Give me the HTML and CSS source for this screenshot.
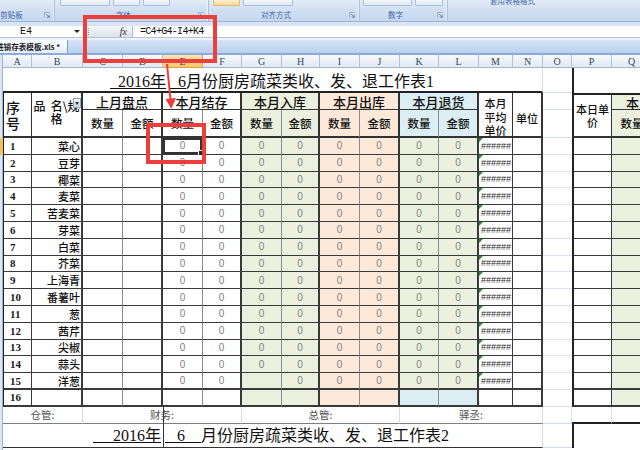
FILE: index.html
```html
<!DOCTYPE html>
<html lang="zh-CN">
<head>
<meta charset="utf-8">
<title>进销存表模板.xls</title>
<link rel="stylesheet" href="styles.css">
</head>
<body>
<div class="ribbon">
  <div class="grp g1">
    <div class="btns"></div>
    <div class="gfoot"><span class="glabel">剪贴板</span><svg class="launch" viewBox="0 0 6 6"><path d="M0.5 5.5V0.5H5.5" fill="none" stroke="#8DA3C2" stroke-width="0.8"/><path d="M2 2L5.2 5.2M5.2 2.8V5.2H2.8" fill="none" stroke="#5A77A2" stroke-width="0.8"/></svg></div>
  </div>
  <div class="grp g2">
    <div class="btns"><span class="btn w50"></span><span class="btn w27"></span><span class="btn w27"></span></div>
    <div class="gfoot"><span class="glabel">字体</span><svg class="launch" viewBox="0 0 6 6"><path d="M0.5 5.5V0.5H5.5" fill="none" stroke="#8DA3C2" stroke-width="0.8"/><path d="M2 2L5.2 5.2M5.2 2.8V5.2H2.8" fill="none" stroke="#5A77A2" stroke-width="0.8"/></svg></div>
  </div>
  <div class="grp g3">
    <div class="btns"><span class="btn hot w27"></span><span class="btn w50"></span></div>
    <div class="gfoot"><span class="glabel">对齐方式</span><svg class="launch" viewBox="0 0 6 6"><path d="M0.5 5.5V0.5H5.5" fill="none" stroke="#8DA3C2" stroke-width="0.8"/><path d="M2 2L5.2 5.2M5.2 2.8V5.2H2.8" fill="none" stroke="#5A77A2" stroke-width="0.8"/></svg></div>
  </div>
  <div class="grp g4">
    <div class="btns"><span class="btn w50"></span><span class="btn w29"></span></div>
    <div class="gfoot"><span class="glabel">数字</span><svg class="launch" viewBox="0 0 6 6"><path d="M0.5 5.5V0.5H5.5" fill="none" stroke="#8DA3C2" stroke-width="0.8"/><path d="M2 2L5.2 5.2M5.2 2.8V5.2H2.8" fill="none" stroke="#5A77A2" stroke-width="0.8"/></svg></div>
  </div>
  <div class="grp g5">
    <div class="btns"><span class="topcap">套用表格格式</span></div>
  </div>
</div>

<div class="fwrap">
  <div class="fbar">
    <div class="namebox"><span>E4</span><span class="dd"></span></div>
    <div class="fxzone"><span class="grip"></span><span class="fx">fx</span></div>
    <div class="formula">=C4+G4-I4+K4</div>
  </div>
</div>

<div class="tabbar">
  <div class="tab"><span>进销存表模板.xls *</span></div>
</div>

<div class="sheet">
  <div class="stub"></div>
  <div class="rowmark"></div>

  <span class="ch">A</span><span class="ch">B</span><span class="ch">C</span><span class="ch">D</span><span class="ch on">E</span><span class="ch">F</span><span class="ch">G</span><span class="ch">H</span><span class="ch">I</span><span class="ch">J</span><span class="ch">K</span><span class="ch">L</span><span class="ch">M</span><span class="ch">N</span><span class="ch">O</span><span class="ch">P</span><span class="ch">Q</span>

  <div class="t1 title"><span><u>&nbsp;&nbsp;2016年</u>&nbsp;<u>&nbsp;&nbsp;6</u>月份厨房疏菜类收、发、退工作表1</span></div>
  <div class="to"></div><div class="tp"></div><div class="tq"></div>

  <div class="hc h-xh"><span>序<br>号</span></div>
  <div class="hc h-pm"><span>品&nbsp;&nbsp;名\规<br>格</span><span class="filter"></span></div>
  <div class="hc h-grp">上月盘点</div>
  <div class="hc h-grp">本月结存</div>
  <div class="hc h-grp gn">本月入库</div>
  <div class="hc h-grp pc">本月出库</div>
  <div class="hc h-grp bl">本月退货</div>
  <div class="hc h-m"><span>本月<br>平均<br>单价</span></div>
  <div class="hc h-n">单位</div>
  <div class="h-o"></div>
  <div class="hc h-p"><span>本日单<br>价</span></div>
  <div class="hc h-q1 gn">本月入库</div>

  <div class="hc hs">数量</div><div class="hc hs r">金额</div>
  <div class="hc hs">数量</div><div class="hc hs r">金额</div>
  <div class="hc hs gn">数量</div><div class="hc hs r gn">金额</div>
  <div class="hc hs pc">数量</div><div class="hc hs r pc">金额</div>
  <div class="hc hs bl">数量</div><div class="hc hs r bl">金额</div>
  <div class="h-o"></div>
  <div class="hc h-q2 gn">数量</div>

  <div class="dr"><span>1</span><span>菜心</span><span></span><span></span><span class="sel">0</span><span>0</span><span>0</span><span>0</span><span>0</span><span>0</span><span>0</span><span>0</span><span>######</span><span></span><span></span><span></span><span></span></div>
  <div class="dr"><span>2</span><span>豆芽</span><span></span><span></span><span>0</span><span>0</span><span>0</span><span>0</span><span>0</span><span>0</span><span>0</span><span>0</span><span>######</span><span></span><span></span><span></span><span></span></div>
  <div class="dr"><span>3</span><span>椰菜</span><span></span><span></span><span>0</span><span>0</span><span>0</span><span>0</span><span>0</span><span>0</span><span>0</span><span>0</span><span>######</span><span></span><span></span><span></span><span></span></div>
  <div class="dr"><span>4</span><span>麦菜</span><span></span><span></span><span>0</span><span>0</span><span>0</span><span>0</span><span>0</span><span>0</span><span>0</span><span>0</span><span>######</span><span></span><span></span><span></span><span></span></div>
  <div class="dr"><span>5</span><span>苦麦菜</span><span></span><span></span><span>0</span><span>0</span><span>0</span><span>0</span><span>0</span><span>0</span><span>0</span><span>0</span><span>######</span><span></span><span></span><span></span><span></span></div>
  <div class="dr"><span>6</span><span>芽菜</span><span></span><span></span><span>0</span><span>0</span><span>0</span><span>0</span><span>0</span><span>0</span><span>0</span><span>0</span><span>######</span><span></span><span></span><span></span><span></span></div>
  <div class="dr"><span>7</span><span>白菜</span><span></span><span></span><span>0</span><span>0</span><span>0</span><span>0</span><span>0</span><span>0</span><span>0</span><span>0</span><span>######</span><span></span><span></span><span></span><span></span></div>
  <div class="dr"><span>8</span><span>芥菜</span><span></span><span></span><span>0</span><span>0</span><span>0</span><span>0</span><span>0</span><span>0</span><span>0</span><span>0</span><span>######</span><span></span><span></span><span></span><span></span></div>
  <div class="dr"><span>9</span><span>上海青</span><span></span><span></span><span>0</span><span>0</span><span>0</span><span>0</span><span>0</span><span>0</span><span>0</span><span>0</span><span>######</span><span></span><span></span><span></span><span></span></div>
  <div class="dr"><span>10</span><span>番薯叶</span><span></span><span></span><span>0</span><span>0</span><span>0</span><span>0</span><span>0</span><span>0</span><span>0</span><span>0</span><span>######</span><span></span><span></span><span></span><span></span></div>
  <div class="dr"><span>11</span><span>葱</span><span></span><span></span><span>0</span><span>0</span><span>0</span><span>0</span><span>0</span><span>0</span><span>0</span><span>0</span><span>######</span><span></span><span></span><span></span><span></span></div>
  <div class="dr"><span>12</span><span>茜芹</span><span></span><span></span><span>0</span><span>0</span><span>0</span><span>0</span><span>0</span><span>0</span><span>0</span><span>0</span><span>######</span><span></span><span></span><span></span><span></span></div>
  <div class="dr"><span>13</span><span>尖椒</span><span></span><span></span><span>0</span><span>0</span><span>0</span><span>0</span><span>0</span><span>0</span><span>0</span><span>0</span><span>######</span><span></span><span></span><span></span><span></span></div>
  <div class="dr"><span>14</span><span>蒜头</span><span></span><span></span><span>0</span><span>0</span><span>0</span><span>0</span><span>0</span><span>0</span><span>0</span><span>0</span><span>######</span><span></span><span></span><span></span><span></span></div>
  <div class="dr heavy"><span>15</span><span>洋葱</span><span></span><span></span><span>0</span><span>0</span><span></span><span>0</span><span>0</span><span>0</span><span>0</span><span>0</span><span>######</span><span></span><span></span><span></span><span></span></div>
  <div class="dr heavy last"><span>16</span><span></span><span></span><span></span><span></span><span></span><span></span><span></span><span></span><span></span><span></span><span></span><span></span><span></span><span></span><span></span><span></span></div>

  <div class="sr"><span class="s2">仓管:</span><span class="s4 pbreak">财务:</span><span class="s4">总管:</span><span class="s4">驿丞:</span><span class="so"></span><span class="sp"></span><span class="sq"></span></div>

  <div class="t2r">
    <div class="t2 title"><span><u>&nbsp;&nbsp;&nbsp;&nbsp;&nbsp;2016年</u>&nbsp;<u>&nbsp;&nbsp;&nbsp;6&nbsp;&nbsp;&nbsp;&nbsp;</u>月份厨房疏菜类收、发、退工作表2</span></div>
    <span class="o2"></span><span class="p2"></span><span class="q2"></span>
  </div>
</div>

<div class="mark mk1"></div>
<div class="mark mk2"></div>
<svg class="arrow" viewBox="0 0 20 50"><path d="M7 2L10.6 39" stroke="#EC3F3B" stroke-width="2" fill="none"/><polygon points="5.5,37 16,36 11.3,47" fill="#EC3F3B"/></svg>
</body>
</html>
```

FILE: styles.css
```css
*{box-sizing:border-box;margin:0;padding:0}
html,body{width:640px;height:450px}
body{position:relative;overflow:hidden;background:#fff;font-family:"Noto Sans CJK SC",sans-serif;color:#111}

/* ---------- ribbon ---------- */
.ribbon{display:flex;height:22px;overflow:hidden;background:linear-gradient(#E4EDF9,#D2E0F3 45%,#C5D8EF);border-bottom:1px solid #9AB5DA}
.grp{display:flex;flex-direction:column;flex:none;border-right:1px solid #A9C0DF;box-shadow:inset -1px 0 0 #EAF1FA}
.g1{width:70px;margin-left:-15px}
.g2{width:154px}
.g3{width:151px}
.g4{width:88px}
.g5{flex:1;border-right:0;box-shadow:none}
.btns{display:flex;gap:3px;height:9px;padding:0 4px;overflow:hidden}
.g2 .btns{padding-left:5px}
.g4 .btns{padding-left:3px}
.btn{height:6px;border:1px solid #A9BFDC;border-top:0;border-radius:0 0 2px 2px;background:linear-gradient(#F5F8FC,#E0E9F5)}
.btn.hot{background:linear-gradient(#FCEFD0,#F7DA9A);border-color:#D8B878}
.w50{width:50px}.w27{width:27px}.w29{width:29px}
.topcap{margin:-4px 0 0 38px;font-size:7.5px;line-height:9px;color:#3E67A5;white-space:nowrap}
.gfoot{display:grid;grid-template-columns:1fr auto 1fr;align-items:center;height:12px;padding-right:4px}
.glabel{grid-column:2;margin-right:12px;font-size:7.5px;line-height:12px;color:#3E67A5;white-space:nowrap}
.launch{grid-column:3;justify-self:end;width:6px;height:6px}

/* ---------- formula bar ---------- */
.fwrap{height:16px;padding-top:4px;background:linear-gradient(#D7E2F2,#E6EDF7)}
.fbar{display:flex;height:12px;background:#fff;border-bottom:1px solid #B5C4D8}
.namebox{width:85px;display:flex;align-items:center;padding-left:20px;font:10px "Liberation Mono",monospace;color:#111;border-right:1px solid #AEBCD0}
.namebox .dd{margin-left:auto;margin-right:4px;border-left:3px solid transparent;border-right:3px solid transparent;border-top:3px solid #222}
.fxzone{width:48px;display:flex;align-items:center;justify-content:space-between;padding:0 5px 0 3px;background:linear-gradient(#F5F7FB,#DCE3ED);border-right:1px solid #AEBCD0}
.grip{width:2px;height:7px;border-left:1px dotted #8C9BB0}
.fx{font:italic 10px "Liberation Serif",serif;color:#333}
.formula{display:flex;align-items:center;padding-left:7px;font:10px "Liberation Mono",monospace;letter-spacing:-0.7px;color:#111}

/* ---------- sheet tabs ---------- */
.tabbar{height:17px;padding-top:2px;background:linear-gradient(#EEF3FA 0,#EEF3FA 2px,#D6E4F6 2px,#B9D0EE);border-bottom:2px solid #8BABD8}
.tab{width:68px;height:13px;display:flex;align-items:center;overflow:hidden;white-space:nowrap;background:linear-gradient(#FFFFFF,#E5EDF8);border-right:1px solid #7C9DCA;font:bold 7.6px "Noto Sans CJK SC",sans-serif;color:#1a1a1a}
.tab span{margin-left:-4px}

/* ---------- sheet grid ---------- */
.sheet{display:grid;width:640px;overflow:hidden;grid-template-columns:3px 29px 51px 40px 40px 40px 39px 40px 38px 40px 40px 39px 40px 34px 30px 29px 40px 40px;grid-template-rows:13px 25px 17px 28px repeat(16,16.8px) 17px 24px 2px}
.stub{grid-column:1;grid-row:1/-1;background:#DCE5F2;border-right:1px solid #9EB6CE}
.rowmark{grid-column:1;grid-row:5;background:#F3C163}

.ch{display:flex;align-items:center;justify-content:center;background:linear-gradient(#F7F9FC,#E2E9F2);border-right:1px solid #B1C3DA;border-bottom:1px solid #9EB6CE;font:10px "Liberation Serif",serif;color:#34465E}
.ch.on{background:linear-gradient(#FBE4B3,#F4C86C);border-right-color:#DDA64C;border-bottom-color:#E0A23C}

.gn{background:#EBF1DE}
.pc{background:#FDE9D9}
.bl{background:#DAEEF3}

/* titles */
.title{display:flex;align-items:flex-end;white-space:nowrap;font:16px/18px "Liberation Serif","Noto Sans CJK SC",serif;color:#111}
.title u{text-decoration:underline 1px}
.t1{grid-column:span 14;padding-left:107px;border-bottom:2px solid #222;border-right:1px solid #D6DDE9}
.to{border-bottom:1px solid #D6DDE9}
.tp{border-left:2px solid #222}

/* header cells */
.hc{display:flex;align-items:center;justify-content:center;text-align:center;white-space:nowrap;border-right:1px solid #333;border-bottom:1px solid #333;font:500 11.5px/13px "Noto Sans CJK SC",sans-serif;color:#111}
.h-xh{grid-row:span 2;border-left:1px solid #222;border-bottom-width:2px;justify-content:flex-start;padding-left:2px;font-size:14px;line-height:16px}
.h-pm{grid-row:span 2;position:relative;align-items:flex-start;padding-top:6px;border-right-width:2px;border-bottom-width:2px;font-size:12px;line-height:13px}
.filter{position:absolute;right:0;top:5px;width:8px;height:10px;border:1px solid #8FA6C6;background:linear-gradient(#F3F6FA,#C8D4E6)}
.filter::after{content:"";position:absolute;left:1px;top:3px;border-left:2.5px solid transparent;border-right:2.5px solid transparent;border-top:3px solid #333}
.h-grp{grid-column:span 2;border-right-width:2px;font-size:13px}
.hs{border-bottom-width:2px;border-right-color:#8C8C8C}
.hs.r{border-right-color:#333;border-right-width:2px}
.h-m{grid-row:span 2;align-items:flex-start;padding-top:4px;border-bottom-width:2px;font-size:11px;line-height:13.5px}
.h-n{grid-row:span 2;padding-top:7px;border-right-width:2px;border-bottom-width:2px;font-size:11px}
.h-o{border-bottom:1px solid #D6DDE9}
.h-p{grid-row:span 2;border-left:2px solid #222;border-top:2px solid #222;border-bottom-width:2px;font-size:11px;line-height:13px}
.h-q1{border-top:2px solid #222;border-right:0;justify-content:flex-start;padding-left:14px;font-size:13px}
.h-q2{border-bottom-width:2px;border-right:0}

/* data rows */
.dr{display:contents}
.dr>span{display:flex;align-items:center;justify-content:center;white-space:nowrap;overflow:hidden;border-right:1px solid #3A3A3A;border-bottom:1px solid #3A3A3A;font:10px "Liberation Sans",sans-serif;color:#808080}
.dr>:nth-child(1){border-left:1px solid #222;justify-content:flex-start;padding-left:6px;font:bold 11px "Liberation Serif",serif;color:#1A1A1A}
.dr>:nth-child(2){justify-content:flex-end;padding-right:1px;font:500 11px "Noto Sans CJK SC",sans-serif;color:#111}
.dr>:nth-child(2n+2):nth-child(-n+14){border-right-width:2px}
.dr>:nth-child(2n+3):nth-child(-n+11){border-right-color:#8C8C8C}
.dr>:nth-child(7),.dr>:nth-child(8),.dr>:nth-child(11),.dr>:nth-child(12),.dr>:nth-child(17){background:#EBF1DE}
.dr>:nth-child(9),.dr>:nth-child(10){background:#FDE9D9}
.dr>:nth-child(13){position:relative;justify-content:flex-start;padding-left:2px;font:9px "Liberation Sans",sans-serif;color:#2A2A2A}
.dr>:nth-child(13):not(:empty)::before{content:"";position:absolute;left:0;top:0;border-top:4px solid #2E8B2E;border-right:4px solid transparent}
.dr>:nth-child(15){border-right:0;border-bottom-color:#E1E4EE}
.dr>:nth-child(16){border-left:2px solid #222}
.dr>:nth-child(17){border-right:0}
.dr.heavy>span:not(:nth-child(15)){border-bottom-width:2px}
.dr.last>:nth-child(11),.dr.last>:nth-child(12){background:#DAEEF3}
.dr>.sel{position:relative;overflow:visible;box-shadow:inset 0 0 0 2px #333}
.dr>.sel::after{content:"";position:absolute;right:-2px;bottom:-2px;width:4px;height:4px;background:#222;border:1px solid #fff}

/* sign row */
.sr{display:contents}
.sr>span{display:flex;align-items:center;justify-content:center;white-space:nowrap;border-right:1px solid #D6DDE9;border-bottom:1px solid #7E7E7E;font:10.5px "Noto Sans CJK SC",sans-serif;color:#505050}
.s2{grid-column:span 2}
.s4{grid-column:span 4}
.pbreak{position:relative}
.pbreak::after{content:"";position:absolute;left:80px;top:0;bottom:-1px;width:1px;background:#333}
.sr>.so{border-bottom-color:#D6DDE9}
.sr>.sp,.sr>.sq{border-bottom:2px solid #222}
.sr>.sq{border-right:0}

/* second title row */
.t2r{display:contents}
.t2{grid-column:span 14;position:relative;padding:0 0 2px 90px;border-bottom:1px solid #333;border-right:1px solid #D6DDE9}
.t2::after{content:"";position:absolute;left:160px;top:0;bottom:-1px;width:1px;background:#333}
.o2{border-bottom:1px solid #D6DDE9}
.p2{border-left:2px solid #222}

/* annotations drawn over the screenshot */
.mark{position:absolute;border:4px solid #EC3F3B}
.mk1{left:83px;top:15px;width:134px;height:48px}
.mk2{left:146px;top:123px;width:60px;height:41px}
.arrow{position:absolute;left:160px;top:62px;width:20px;height:50px}
```
